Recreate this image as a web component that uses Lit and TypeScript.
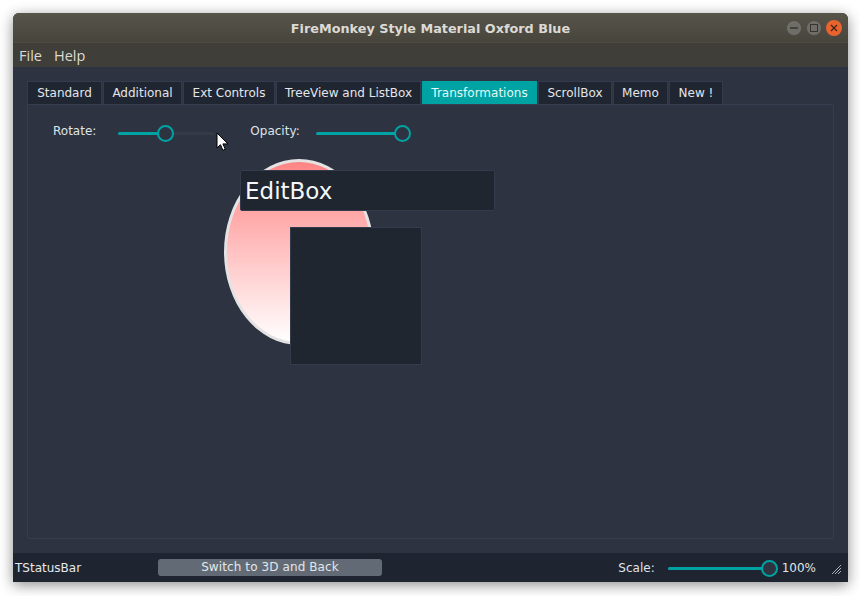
import { LitElement, html, css } from 'lit';
import { customElement } from 'lit/decorators.js';

const tabs = ['Standard', 'Additional', 'Ext Controls', 'TreeView and ListBox', 'Transformations', 'ScrollBox', 'Memo', 'New !'];
const tabWidths = [75, 79, 92, 145, 115, 74, 55, 54];

@customElement('app-slider')
class AppSlider extends LitElement {
  static properties = { width: { type: Number }, pos: { type: Number } };
  width = 100;
  pos = 0;

  static styles = css`
    :host { display: block; position: relative; height: 18px; }
    .track { position: absolute; left: 0; top: 7.5px; height: 3px; border-radius: 2px; background: #333b48; }
    .fill { position: absolute; left: 0; top: 7.5px; height: 3px; border-radius: 2px 0 0 2px; background: #00a3a3; }
    .thumb { position: absolute; top: 0.5px; width: 17px; height: 17px; box-sizing: border-box; border-radius: 50%; border: 2px solid #00a3a3; background: #2d3340; }
  `;

  render() {
    return html`
      <div class="track" style="width:${this.width}px"></div>
      <div class="fill" style="width:${this.pos}px"></div>
      <div class="thumb" style="left:${this.pos - 8.5}px"></div>
    `;
  }
}

@customElement('app-root')
class AppRoot extends LitElement {
  static styles = css`
    :host { display: block; width: 860px; height: 596px; background: #fff; overflow: hidden; font-family: "DejaVu Sans", sans-serif; font-size: 12px; color: #dfe3e8; }
    .stage { padding: 13px 12px 14px 13px; }
    .window { width: 835px; height: 569px; display: flex; flex-direction: column; border-radius: 6px 6px 0 0; overflow: hidden; background: #2d3340; box-shadow: 0 3px 14px rgba(0, 0, 0, .45); }

    .titlebar { position: relative; height: 30px; flex: none; display: flex; align-items: center; justify-content: center; padding-top: 1px; background: linear-gradient(#57544a, #47453d); border-bottom: 1px solid #4c4a42; box-sizing: border-box; font-weight: bold; font-size: 12.8px; color: #dcdad5; }
    .controls { position: absolute; right: 6px; top: 7px; display: flex; gap: 4px; }
    .controls svg { display: block; }

    .menubar { height: 24px; flex: none; display: flex; align-items: center; gap: 12px; padding-left: 6px; background: #403e38; font-family: "Open Sans", sans-serif; font-size: 14.5px; color: #dcdad5; }

    .content { flex: 1; display: flex; flex-direction: column; padding: 14px; min-height: 0; }
    .tabs { display: flex; height: 23px; flex: none; gap: 1px; }
    .tab { display: flex; align-items: center; justify-content: center; box-sizing: border-box; padding-bottom: 1px; background: #1f2531; border: 1px solid #333b4d; border-bottom: none; color: #e3e6ea; }
    .tab.active { background: #00a3a3; border-color: #00a3a3; color: #e6f7f7; }

    .panel { position: relative; flex: 1; border: 1px solid #363d50; border-radius: 0 0 2px 2px; box-sizing: border-box; }
    .controls-row { display: flex; align-items: center; padding: 19px 0 0 25px; }
    .lbl { position: relative; top: -2px; }
    .rotate { margin-left: 22px; width: 97px; }
    .opacity-lbl { margin-left: 35px; }
    .opacity { margin-left: 16px; width: 87px; }

    .ellipse { position: absolute; left: 196px; top: 54px; width: 150px; height: 186px; box-sizing: border-box; border-radius: 50%; border: 3px solid #e4e2e2; background: linear-gradient(#ff8585, #ffffff); }
    .editbox { position: absolute; left: 212px; top: 65px; width: 255px; height: 41px; box-sizing: border-box; padding-left: 4px; display: flex; align-items: center; background: #1f2630; border: 1px solid #333b4d; border-radius: 2px; font-size: 23px; color: #f5f7fa; }
    .darkbox { position: absolute; left: 262px; top: 122px; width: 132px; height: 138px; box-sizing: border-box; background: #1f2630; border: 1px solid #333b4d; }
    .cursor { position: absolute; left: 188px; top: 27px; }

    .statusbar { position: relative; height: 29px; flex: none; display: flex; align-items: center; background: #1f2530; }
    .status-text { margin-left: 2px; width: 143px; color: #e6e9ed; }
    .switch { width: 224px; height: 17px; border: none; border-radius: 3px; background: #626b75; color: #e3e6ea; font: inherit; padding: 0 0 1px; margin-top: -1px; letter-spacing: .1px; }
    .scale-lbl { margin-left: auto; }
    .scale { margin-left: 13px; width: 102px; margin-top: 1px; }
    .pct { margin-left: 12px; margin-right: 32px; }
    .grip { position: absolute; right: 7px; bottom: 8px; }
  `;

  render() {
    return html`
      <div class="stage">
        <div class="window">
          <div class="titlebar">
            FireMonkey Style Material Oxford Blue
            <div class="controls">
              <svg width="16" height="16" viewBox="0 0 16 16">
                <circle cx="8" cy="8" r="7.6" fill="#6e6d68" stroke="#4a4942" stroke-width=".8"/>
                <path d="M4 8h8" stroke="#35342f" stroke-width="1.4"/>
              </svg>
              <svg width="16" height="16" viewBox="0 0 16 16">
                <circle cx="8" cy="8" r="7.6" fill="#6e6d68" stroke="#4a4942" stroke-width=".8"/>
                <rect x="4.5" y="4.5" width="7" height="7" fill="none" stroke="#35342f"/>
              </svg>
              <svg width="16" height="16" viewBox="0 0 16 16">
                <circle cx="8" cy="8" r="8" fill="#e9632f"/>
                <path d="M5 5l6 6M11 5l-6 6" stroke="#3d2215" stroke-width="1.2"/>
              </svg>
            </div>
          </div>
          <div class="menubar"><span>File</span><span>Help</span></div>
          <div class="content">
            <div class="tabs">
              ${tabs.map((t, i) => html`<div class="tab ${t === 'Transformations' ? 'active' : ''}" style="width:${tabWidths[i]}px">${t}</div>`)}
            </div>
            <div class="panel">
              <div class="controls-row">
                <span class="lbl">Rotate:</span>
                <app-slider class="rotate" .width=${97} .pos=${47}></app-slider>
                <span class="lbl opacity-lbl">Opacity:</span>
                <app-slider class="opacity" .width=${87} .pos=${87}></app-slider>
              </div>
              <div class="ellipse"></div>
              <div class="editbox">EditBox</div>
              <div class="darkbox"></div>
              <svg class="cursor" width="14" height="20" viewBox="0 0 14 20">
                <path d="M1 1v15l3.5-3.3 2.4 5.6 2.4-1-2.4-5.4H12z" fill="#fff" stroke="#000" stroke-width="1"/>
              </svg>
            </div>
          </div>
          <div class="statusbar">
            <span class="status-text">TStatusBar</span>
            <button class="switch">Switch to 3D and Back</button>
            <span class="scale-lbl">Scale:</span>
            <app-slider class="scale" .width=${102} .pos=${102}></app-slider>
            <span class="pct">100%</span>
            <svg class="grip" width="10" height="10" viewBox="0 0 10 10">
              <path d="M1 10L10 1M4 10l6-6M7 10l3-3" stroke="#aab0b8" stroke-width="1"/>
            </svg>
          </div>
        </div>
      </div>
    `;
  }
}
